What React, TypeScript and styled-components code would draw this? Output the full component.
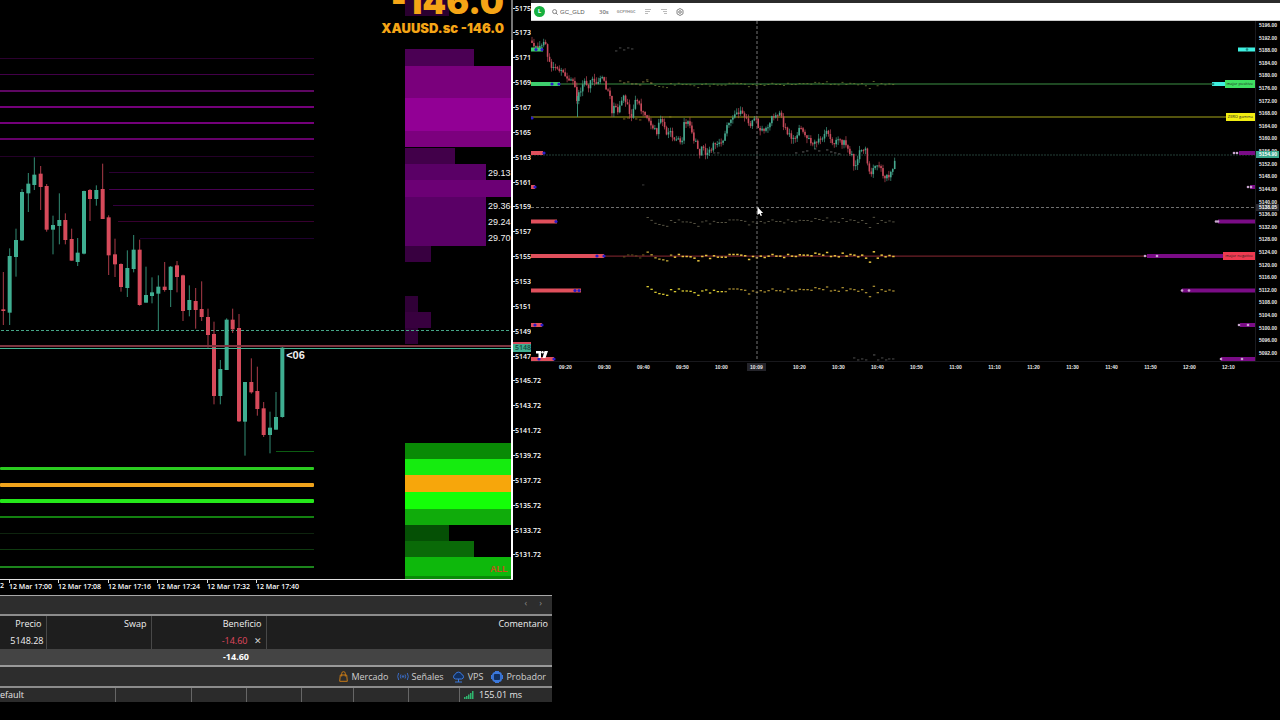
import React from "react";
import styled, { createGlobalStyle } from "styled-components";

const Global = createGlobalStyle`
  * { box-sizing: border-box; }
  body { margin: 0; background: #000; color: #e6e6e6; font-family: "Open Sans", "Noto Sans", sans-serif; }
  button, input { font: inherit; color: inherit; }
`;

const TEAL = "#3fae91";
const RED = "#d64a5a";

/* ---------- data ---------- */

type Candle = [x: number, up: 0 | 1, hi: number, top: number, bottom: number, lo: number];

// Coordinates are thirds of a pixel, measured from y = 140.
const candles: Candle[] = [
  [10, 0, 396, 508, 513, 555], [29, 1, 325, 348, 518, 555], [48, 1, 266, 300, 351, 410],
  [66, 1, 147, 156, 301, 303], [85, 1, 99, 131, 160, 216], [103, 1, 52, 104, 135, 150],
  [122, 0, 78, 101, 141, 210], [140, 0, 132, 138, 269, 275], [159, 1, 227, 255, 269, 343],
  [178, 1, 160, 240, 258, 313], [196, 0, 220, 240, 300, 313], [215, 0, 266, 297, 362, 362],
  [233, 1, 294, 338, 366, 378], [252, 1, 152, 153, 341, 343], [270, 0, 147, 150, 177, 243],
  [289, 1, 136, 150, 177, 197], [308, 0, 71, 147, 237, 237], [326, 0, 226, 232, 346, 405],
  [345, 0, 296, 343, 373, 411], [363, 0, 370, 372, 441, 455], [382, 1, 331, 384, 444, 471],
  [401, 1, 285, 329, 387, 397], [419, 0, 299, 329, 495, 497], [438, 1, 380, 465, 488, 488],
  [456, 1, 412, 457, 468, 490], [475, 1, 406, 440, 461, 570], [494, 0, 366, 440, 450, 455],
  [512, 1, 378, 380, 450, 501], [531, 0, 363, 376, 411, 457], [549, 0, 404, 406, 513, 543],
  [568, 1, 436, 480, 510, 529], [587, 0, 444, 483, 510, 566], [605, 0, 424, 507, 531, 543],
  [624, 0, 506, 531, 585, 623], [642, 0, 545, 582, 768, 793], [661, 1, 660, 687, 768, 793],
  [680, 1, 535, 539, 690, 690], [698, 0, 506, 539, 568, 579], [717, 0, 522, 564, 844, 846],
  [735, 1, 726, 726, 845, 947], [754, 0, 655, 726, 757, 761], [772, 0, 680, 753, 807, 827],
  [791, 0, 786, 805, 885, 891], [810, 1, 815, 863, 885, 940], [828, 1, 756, 831, 869, 869],
  [847, 1, 620, 623, 831, 833],
];

// [top, bottom, right edge, colour]
const profile: [number, number, number, string][] = [
  [0, 16, 449, "#2a0030"], [49, 66, 474, "#4b0054"], [66, 98, 511, "#7a007c"], [98, 131, 511, "#920095"],
  [131, 147, 511, "#7c007e"], [148, 164, 455, "#42004a"], [164, 180, 486, "#5a0066"],
  [180, 197, 511, "#6c0075"], [197, 246, 486, "#5a0066"], [246, 262, 431, "#380040"],
  [296, 312, 418, "#300037"], [312, 328, 431, "#38003f"], [328, 344, 418, "#300037"],
  [443, 459, 511, "#098a05"], [459, 475, 511, "#15ec0f"], [475, 492, 511, "#f7a60b"],
  [492, 509, 511, "#14ff08"], [509, 525, 511, "#10ac0b"], [525, 541, 449, "#055005"],
  [541, 557, 474, "#0a6a08"], [557, 576, 511, "#0eb80c"], [576, 579, 511, "#0a8a08"],
];

// [y, start x, thickness, colour]
const levels: [number, number, number, string][] = [
  [58, 0, 1, "#2c0030"], [74, 0, 1, "#420048"], [91, 0, 2, "#5e0762"], [107, 0, 2, "#74007a"],
  [123, 0, 2, "#74007a"], [139, 0, 2, "#66006a"], [156, 0, 1, "#240028"], [172, 109, 1, "#2c0034"],
  [189, 109, 1, "#480052"], [205, 113, 1, "#34003e"], [221, 118, 1, "#380030"], [238, 140, 1, "#200030"],
  [451, 276, 1, "#0c5c12"], [468, 0, 3, "#2bcb20"], [485, 0, 4, "#efa31c"], [501, 0, 4, "#25e81a"],
  [517, 0, 2, "#138010"], [533, 0, 1, "#0e240e"], [549, 0, 1, "#0f3a10"], [567, 0, 2, "#1c841c"],
];

const leftPrices = Array.from({ length: 23 }, (_, i) => {
  const p = 5175 - i * 2;
  return p >= 5147 ? String(p) : `${p}.72`;
});

const leftTimes = ["17:00", "17:08", "17:16", "17:24", "17:32", "17:40"];
const rightPrices = Array.from({ length: 27 }, (_, i) => `${5196 - i * 4}.00`);
const rightTimes = Array.from({ length: 18 }, (_, i) => {
  const m = 560 + i * 10;
  return `${String(Math.floor(m / 60)).padStart(2, "0")}:${String(m % 60).padStart(2, "0")}`;
});

const trend: [number, number][] = [
  [532, 44], [541, 46], [545, 41], [547, 56], [549, 64], [553, 68], [558, 67], [563, 72], [566, 76],
  [570, 80], [573, 82], [575, 90], [577, 99], [579, 92], [582, 90], [584, 80], [588, 88], [591, 80],
  [594, 80], [597, 86], [601, 80], [604, 79], [607, 93], [610, 94], [612, 112], [615, 103], [618, 113],
  [621, 100], [624, 96], [627, 104], [630, 116], [632, 119], [634, 106], [637, 98], [640, 107],
  [645, 115], [648, 116], [651, 125], [654, 129], [657, 132], [659, 118], [663, 122], [666, 137],
  [669, 130], [672, 137], [677, 138], [682, 142], [684, 120], [688, 122], [692, 133], [697, 147],
  [699, 154], [703, 145], [706, 157], [710, 150], [713, 146], [722, 144], [725, 132], [730, 120],
  [733, 116], [740, 111], [743, 113], [750, 127], [753, 118], [757, 120], [758, 127], [763, 132],
  [768, 129], [772, 117], [775, 118], [781, 113], [783, 125], [787, 132], [794, 139], [798, 132],
  [802, 128], [805, 138], [810, 141], [816, 143], [820, 137], [827, 133], [832, 144], [837, 142],
  [843, 142], [848, 148], [852, 157], [854, 168], [857, 162], [859, 148], [865, 148], [867, 160],
  [870, 178], [873, 167], [878, 163], [881, 170], [885, 179], [890, 173], [893, 168], [896, 155],
];

const trendAt = (x: number) => {
  for (let i = 1; i < trend.length; i++) {
    const [x0, y0] = trend[i - 1];
    const [x1, y1] = trend[i];
    if (x <= x1) return y0 + ((y1 - y0) * (x - x0)) / (x1 - x0);
  }
  return trend[trend.length - 1][1];
};

const noise = (i: number) => {
  const s = Math.sin(i * 127.1) * 43758.5453;
  return s - Math.floor(s);
};

const wave = [
  -12, -4, 5, 9, 11, 14, -3, 3, -5, 1, 1, 2, 6, 14, 1, -2, 7, -1, 3, 3, 3, -5, -5, -5, -3, -1, 10, 1, 5, 0,
  4, 0, -5, 0, 0, 4, -5, 0, 1, -4, -3, -3, -1, -9, -6, -3, -11, 1, -1, 2, -9, 0, -5, -3, 2, -3, 6, 18,
  -13, 6, -3, 2, -2, 1,
];

const strayDots: [number, number, string][] = [
  [616, 51, "#555"], [620, 48, "#555"], [624, 50, "#555"], [628, 48, "#555"], [632, 49, "#555"],
  [620, 81, "#8a7a40"], [624, 83, "#8a7a40"], [628, 82, "#8a7a40"], [632, 84, "#8a7a40"], [636, 84, "#8a7a40"],
  [640, 85, "#8a7a40"], [643, 82, "#8a7a40"], [647, 80, "#8a7a40"], [651, 83, "#8a7a40"],
  [624, 119, "#8a6a20"], [628, 118, "#8a6a20"], [636, 119, "#8a6a20"], [640, 120, "#8a6a20"], [670, 117, "#8a7a20"],
  [643, 185, "#444"], [624, 257, "#6a5a20"], [628, 255, "#6a5a20"], [632, 255, "#6a5a20"], [636, 256, "#6a5a20"],
  [640, 258, "#6a5a20"], [643, 255, "#8a6a20"], [714, 153, "#555"], [718, 153, "#555"],
  [796, 153, "#666"], [803, 152, "#666"], [807, 151, "#666"], [815, 149, "#666"], [819, 151, "#666"],
  [827, 150, "#666"], [831, 152, "#666"], [835, 153, "#666"], [839, 154, "#666"],
  [854, 358, "#555"], [858, 360, "#555"], [862, 359, "#555"], [866, 360, "#555"], [874, 355, "#666"],
  [878, 360, "#555"], [882, 358, "#555"], [886, 360, "#555"], [889, 359, "#555"], [893, 359, "#555"],
];

// [y, right edge, colour, marker centres]
const leftBars: [number, number, string, number[]][] = [
  [49.5, 543, "#3ecf6e", [536, 542]], [84, 560, "#3ecf6e", [552, 559]], [118, 531, "#d64a5a", [532]],
  [153, 543, "#e0505c", [544]], [187, 535, "#e0505c", [535]], [221.5, 557, "#e0505c", [556]],
  [256, 604, "#e0505c", [597, 604]], [290.5, 581, "#e0505c", [575, 579]], [325, 542, "#e0505c", [535, 542]],
  [359, 554, "#e0505c", [539, 554]],
];

// [y, left edge, colour, marker centres]
const rightBars: [number, number, string, number[]][] = [
  [49.5, 1238, "#3ff0e0", [1247]], [84, 1212, "#3ff0e0", [1213]], [153, 1239, "#7a0c86", [1234, 1237]],
  [187, 1250, "#7a0c86", [1248, 1251]], [221.5, 1218, "#7a0c86", [1216, 1218]],
  [256, 1147, "#7a0c86", [1145, 1157]], [290.5, 1182, "#7a0c86", [1182, 1189]],
  [325, 1240, "#7a0c86", [1239, 1248]], [359, 1221, "#7a0c86", [1221, 1242]],
];

/* ---------- layout ---------- */

const Desktop = styled.main`
  display: grid;
  grid-template-columns: minmax(0, 69fr) minmax(0, 91fr);
  align-items: start;
  overflow: hidden;
`;
const Terminal = styled.section`
  min-width: 0;
`;
const ChartRow = styled.div`
  display: flex;
  height: 579px;
`;
const Plot = styled.div`
  position: relative;
  flex: 1;
  min-width: 0;
  overflow: hidden;
`;
const Drawing = styled.svg`
  display: block;
  width: 100%;
  height: 100%;
`;
const PlotEdge = styled.div`
  width: 2px;
  background: linear-gradient(#777 40px, #fff 40px);
`;
const PriceScale = styled.div`
  position: relative;
  width: 39px;
  height: 562px;
  padding-top: 1px;
  display: flex;
  flex-direction: column;
  justify-content: space-between;
`;
const PriceTick = styled.span`
  display: flex;
  align-items: center;
  height: 14px;
  font-size: 7px;
  font-weight: 600;
  color: #fff;
  &::before { content: ""; width: 2px; height: 1px; background: #ddd; }
`;
const BidTag = styled.span`
  position: absolute;
  top: 342px;
  left: 0;
  width: 22px;
  height: 10px;
  padding-left: 2px;
  border-top: 2px solid #d64a5a;
  background: #3fae91;
  color: #14483c;
  font-size: 7px;
  font-weight: 600;
  line-height: 8px;
`;
const Headline = styled.div`
  position: absolute;
  right: 7px;
  top: -17px;
  text-align: right;
  color: #f5a516;
  font-family: Inter, sans-serif;
  font-weight: 900;
`;
const Points = styled.div`
  font-size: 34px;
  line-height: 38px;
`;
const Symbol = styled.div`
  font-size: 13px;
  line-height: 15px;
`;
const Note = styled.span<{ $top: number; $left: string; $color?: string; $size?: number; $bold?: boolean }>`
  position: absolute;
  top: ${(p) => p.$top}px;
  left: ${(p) => p.$left};
  color: ${(p) => p.$color ?? "#f0f0f0"};
  font-family: "Liberation Sans", sans-serif;
  font-size: ${(p) => p.$size ?? 9}px;
  font-weight: ${(p) => (p.$bold ? 700 : 400)};
  line-height: 12px;
`;
const TimeScale = styled.div`
  display: flex;
  width: 93%;
  height: 16px;
  font-size: 7px;
  font-weight: 600;
  line-height: 11px;
  color: #fff;
`;
const AxisLine = styled.div`
  width: 93%;
  height: 1px;
  background: #e0e0e0;
`;
const TimeStub = styled.span`
  width: 9px;
  flex: none;
`;
const TimeTick = styled.span`
  position: relative;
  width: 50px;
  flex: 0 1 50px;
  margin-right: -1px;
  white-space: nowrap;
  padding-top: 1px;
  &:nth-child(odd) { margin-right: 0; }
  &::before { content: ""; position: absolute; left: 0; top: 0; width: 1px; height: 3px; background: #ddd; }
`;

const Toolbox = styled.div`
  background: #2d2d2d;
  border-top: 1px solid #a8a8a8;
  margin-top: -1px;
`;
const TabStrip = styled.div`
  display: flex;
  justify-content: flex-end;
  align-items: center;
  gap: 12px;
  height: 18px;
  padding: 0 10px 4px 0;
`;
const PlainButton = styled.button`
  display: inline-flex;
  align-items: center;
  gap: 3px;
  padding: 0;
  border: 0;
  background: none;
  font-size: 9px;
  line-height: 12px;
  color: #cfcfcf;
  cursor: pointer;
`;
const ArrowButton = styled(PlainButton)`
  color: #8a8a8a;
`;
const Trades = styled.table`
  width: 100%;
  table-layout: fixed;
  border-collapse: collapse;
  border-top: 2px solid #8c8c8c;
  border-bottom: 2px solid #9a9a9a;
  background: #1e1e1e;
  font-size: 9px;
  line-height: 12px;
  color: #f0f0f0;
`;
const Cell = styled.td<{ $divided?: boolean; $pad?: number }>`
  padding: 0 ${(p) => p.$pad ?? 4}px 0 0;
  height: 17px;
  text-align: right;
  font-weight: 500;
  white-space: nowrap;
  border-right: ${(p) => (p.$divided ? "1px solid #484848" : "0")};
`;
const Loss = styled.span`
  color: #e0485e;
  margin-right: 6px;
`;
const TotalRow = styled.tr`
  background: #444;
  color: #fff;
  & > td { font-weight: 700; }
`;
const Services = styled.nav`
  display: flex;
  justify-content: flex-end;
  align-items: center;
  gap: 8px;
  height: 19px;
  padding-right: 6px;
`;
const StatusBar = styled.footer`
  display: flex;
  height: 16px;
  border-top: 2px solid #8c8c8c;
  background: #2b2b2b;
  font-size: 9px;
  font-weight: 500;
  line-height: 14px;
`;
const StatusCell = styled.span<{ $width?: number }>`
  display: flex;
  align-items: center;
  gap: 5px;
  flex: ${(p) => (p.$width ? `0 1 ${p.$width}px` : "1")};
  border-right: ${(p) => (p.$width ? "1px solid #666" : "0")};
  padding-left: ${(p) => (p.$width ? 0 : 4)}px;
`;

const Browser = styled.section`
  position: relative;
  margin-left: -21px;
  padding-top: 3px;
  background: #2b2b2b;
`;
const Toolbar = styled.header`
  display: flex;
  align-items: center;
  height: 18px;
  padding-left: 3px;
  border-bottom: 1px solid #ccc;
  background: #fff;
  color: #777;
  font-size: 6px;
`;
const Avatar = styled.button`
  width: 11px;
  height: 11px;
  padding: 0;
  border: 0;
  border-radius: 50%;
  background: #17b03f;
  color: #fff;
  font-size: 6px;
  font-weight: 700;
  line-height: 11px;
`;
const SearchBox = styled.label`
  display: flex;
  align-items: center;
  gap: 2px;
  width: 47px;
  margin-left: 7px;
`;
const SearchInput = styled.input`
  width: 37px;
  padding: 0;
  border: 0;
  outline: 0;
  background: none;
  font-family: "Liberation Sans", sans-serif;
  font-size: 6px;
  color: #555;
`;
const ToolButton = styled(PlainButton)<{ $size?: number }>`
  margin-right: 8px;
  font-size: ${(p) => p.$size ?? 6}px;
  font-weight: 600;
  color: #777;
`;
const MarketRow = styled.div`
  display: flex;
  height: 340px;
  background: #000;
`;
const MarketScale = styled.div`
  position: relative;
  width: 25px;
  padding: 1px 0 4px 3px;
  border-left: 1px solid #1a1a1f;
  display: flex;
  flex-direction: column;
  justify-content: space-between;
  font: 700 5px/7px "Liberation Sans", sans-serif;
  color: #e8e8e8;
`;
const ScaleTag = styled.span<{ $top: number; $bg: string }>`
  position: absolute;
  left: 0;
  top: ${(p) => p.$top}px;
  width: 23px;
  padding-left: 3px;
  background: ${(p) => p.$bg};
  color: #fff;
`;
const LineTag = styled.span<{ $top: number; $bg: string }>`
  position: absolute;
  right: 0;
  top: ${(p) => p.$top}px;
  padding: 0 2px;
  background: ${(p) => p.$bg};
  color: #222;
  font: 400 4px/8px "Open Sans", sans-serif;
  white-space: nowrap;
`;
const MarketTimes = styled.div`
  display: flex;
  height: 12px;
  padding: 1px 32px 0 15px;
  border-top: 1px solid #18181c;
  background: #000;
  font: 700 5px/8px "Liberation Sans", sans-serif;
  color: #e8e8e8;
`;
const MarketTime = styled.span<{ $active?: boolean }>`
  flex: 1;
  text-align: center;
  & > span {
    position: relative;
    padding: 1px ${(p) => (p.$active ? 3 : 0)}px;
    right: ${(p) => (p.$active ? 4 : 0)}px;
    background: ${(p) => (p.$active ? "#24242a" : "none")};
  }
`;
const TvLogo = styled.svg`
  position: absolute;
  left: 5px;
  bottom: 3px;
  width: 12px;
  height: 7px;
`;

/* ---------- charts ---------- */

const TerminalChart = () => (
  <Drawing viewBox="0 0 511 579" preserveAspectRatio="none" role="img" aria-label="XAUUSD">
    {profile.map(([t, b, r, c]) => (
      <rect key={t} x={405} y={t} width={r - 405} height={b - t} fill={c} />
    ))}
    {levels.map(([y, x, h, c]) => (
      <rect key={y} x={x} y={y - Math.floor(h / 2)} width={314 - x} height={h} rx={h > 2 ? 1 : 0} fill={c} />
    ))}
    <line x1={1} x2={511} y1={330.5} y2={330.5} stroke="#46a888" strokeDasharray="3 2" />
    {candles.map(([x, up, hi, t, b, lo]) => {
      const c = up ? TEAL : RED;
      return (
        <g key={x} fill={c}>
          <rect x={x / 3 - 0.5} y={140 + hi / 3} width={1} height={(lo - hi) / 3} opacity={0.8} />
          <rect x={x / 3 - 2} y={140 + t / 3} width={4} height={Math.max(1.5, (b - t) / 3)} />
        </g>
      );
    })}
    <rect x={0} y={345} width={511} height={2} fill="#7c3540" />
    <rect x={0} y={348} width={511} height={1} fill="#45b394" />
  </Drawing>
);

const MarketChart = () => (
  <Drawing viewBox="531 21 724 340" preserveAspectRatio="none" role="img" aria-label="GC_GLD">
    <rect x={531} y={83.5} width={724} height={1} fill="#3c8f45" />
    <rect x={531} y={116.5} width={724} height={1} fill="#a5a51a" />
    <line x1={531} x2={1255} y1={155} y2={155} stroke="#2f5048" strokeWidth={0.8} strokeDasharray="2 1" />
    <rect x={531} y={255.6} width={724} height={1} fill="#8a2833" />
    {wave.map((d, i) => {
      const x = 646.5 + i * 3.9;
      const y = d / 3;
      return (
        <g key={i}>
          <rect x={x} y={84 + y * 0.7} width={2} height={0.8} fill="#6f7a35" />
          <rect x={x} y={221.2 + y} width={2.4} height={0.8} fill="#6a6652" />
          <rect x={x} y={255.4 + y} width={2.4} height={1.5} fill={i < 7 ? "#a89030" : "#e8c540"} />
          <rect x={x} y={290 + y} width={2.4} height={1.3} fill={i < 20 ? "#d8c832" : "#a58a30"} />
        </g>
      );
    })}
    {strayDots.map(([x, y, c]) => (
      <rect key={`${x}-${y}`} x={x - 1} y={y - 0.5} width={2.4} height={0.9} fill={c} />
    ))}
    {Array.from({ length: 187 }, (_, i) => {
      const x = 532 + i * 1.95;
      const a = trendAt(x - 1.95) + (noise(i) - 0.5) * 6;
      const b = trendAt(x) + (noise(i + 1) - 0.5) * 6;
      const top = Math.min(a, b);
      const h = Math.max(1, Math.abs(a - b));
      const up = noise(i + 400) * 5;
      const down = noise(i + 900) * 5;
      return (
        <g key={i} fill={b < a ? "#46a88e" : "#c94b5c"}>
          <rect x={x - 0.4} y={top - up} width={0.8} height={h + up + down} opacity={0.8} />
          <rect x={x - 0.8} y={top} width={1.6} height={h} />
        </g>
      );
    })}
    <rect x={577} y={96} width={0.9} height={21} fill="#3f9c84" />
    {leftBars.map(([y, r, c, marks]) => (
      <g key={y}>
        <rect x={531} y={y - 2} width={Math.max(0, r - 531)} height={4} fill={c} />
        {marks.map((m) => (
          <circle key={m} cx={m} cy={y} r={1.6} fill="#2a1cc8" />
        ))}
      </g>
    ))}
    {rightBars.map(([y, l, c, marks]) => (
      <g key={y}>
        <rect x={l} y={y - 2} width={1255 - l} height={4} fill={c} />
        {marks.map((m) => (
          <circle key={m} cx={m} cy={y} r={1.3} fill={c === "#7a0c86" ? "#c9a6cf" : "#1f8f88"} />
        ))}
      </g>
    ))}
    <line x1={757} x2={757} y1={21} y2={361} stroke="#747474" strokeWidth={1} strokeDasharray="3 2" />
    <line x1={531} x2={1255} y1={207.5} y2={207.5} stroke="#707070" strokeWidth={1} strokeDasharray="3 2" />
    <path d="M757.5 207v8l2-1.600 1.200 2.600 1.300-.6-1.200-2.500h2.300z" fill="#fff" />
  </Drawing>
);

/* ---------- icons ---------- */

const BagIcon = () => (
  <svg width="9" height="11" viewBox="0 0 9 11" fill="none" stroke="#c77a16">
    <path d="M1.300 4h6.400l.6 6.300H.7zM2.700 5.500V2.500a1.800 1.800 0 013.600 0v3" />
  </svg>
);
const SignalIcon = () => (
  <svg width="12" height="9" viewBox="0 0 12 9" fill="none" stroke="#3a6bc4">
    <circle cx="6" cy="4.500" r=".8" fill="#3a6bc4" />
    <path d="M4 2.500q-1.300 2 0 4M8 2.500q1.300 2 0 4M1.700 1q-2 3.500 0 7M10.300 1q2 3.500 0 7" />
  </svg>
);
const CloudIcon = () => (
  <svg width="13" height="12" viewBox="0 0 13 12" fill="#12305e" stroke="#3b78dc">
    <path d="M3.500 8a2.300 2.300 0 01-.3-4.500 3.400 3.400 0 016.500 0A2.300 2.300 0 019.700 8z" />
    <path d="M6.500 8v3M3 11h7" />
  </svg>
);
const ChipIcon = () => (
  <svg width="12" height="12" viewBox="0 0 12 12" fill="none" stroke="#3b78dc">
    <rect x="2" y="2" width="8" height="8" rx="2" fill="#12305e" strokeWidth="1.800" />
    <path d="M4 .5h4M4 11.500h4M.5 4v4M11.500 4v4" />
  </svg>
);
const BarsIcon = () => (
  <svg width="10" height="8" viewBox="0 0 10 8" fill="#2fb56e">
    <path d="M0 6h1.500v2H0zM2 5h1.500v3H2zM4 3.500h1.500V8H4zM6 2h1.500v6H6zM8 0h1.500v8H8z" />
  </svg>
);
const SearchIcon = () => (
  <svg width="6" height="6" viewBox="0 0 6 6" fill="none" stroke="#666" strokeWidth=".8">
    <circle cx="2.600" cy="2.600" r="2" />
    <path d="M4 4l1.700 1.700" />
  </svg>
);
const LinesIcon = ({ flip }: { flip?: boolean }) => (
  <svg width="8" height="7" viewBox="0 0 8 7" fill="none" stroke="#aaa" strokeWidth=".8">
    <path d={flip ? "M1 1.500h6M3 3.500h4M4 5.500h3" : "M1 1.500h6M1 3.500h5M1 5.500h3"} />
  </svg>
);
const GearIcon = () => (
  <svg width="8" height="8" viewBox="0 0 8 8" fill="none" stroke="#666" strokeWidth=".8">
    <path d="M4 .5l3 1.700v3.600L4 7.500l-3-1.700V2.200z" />
    <circle cx="4" cy="4" r="1.300" />
  </svg>
);

/* ---------- page ---------- */

const App: React.FC = () => (
  <>
    <Global />
    <Desktop>
      <Terminal>
        <ChartRow>
          <Plot>
            <TerminalChart />
            <Headline>
              <Points>-146.0</Points>
              <Symbol>XAUUSD.sc -146.0</Symbol>
            </Headline>
            <Note $top={167} $left="calc(100% - 23px)">29.13</Note>
            <Note $top={200} $left="calc(100% - 23px)">29.36</Note>
            <Note $top={216} $left="calc(100% - 23px)">29.24</Note>
            <Note $top={232} $left="calc(100% - 23px)">29.70</Note>
            <Note $top={349} $left="56%" $size={11} $bold>&lt;06</Note>
            <Note $top={563} $left="calc(100% - 21px)" $color="#c4541a" $bold>ALL</Note>
          </Plot>
          <PlotEdge />
          <PriceScale>
            {leftPrices.map((p) => (
              <PriceTick key={p}>{p}</PriceTick>
            ))}
            <BidTag>5148</BidTag>
          </PriceScale>
        </ChartRow>
        <AxisLine />
        <TimeScale>
          <TimeStub>2</TimeStub>
          {leftTimes.map((t) => (
            <TimeTick key={t}>12 Mar {t}</TimeTick>
          ))}
        </TimeScale>

        <Toolbox>
          <TabStrip>
            <ArrowButton aria-label="Anterior">‹</ArrowButton>
            <ArrowButton aria-label="Siguiente">›</ArrowButton>
          </TabStrip>
          <Trades>
            <colgroup>
              <col style={{ width: 46 }} />
              <col style={{ width: 105 }} />
              <col style={{ width: 115 }} />
              <col />
            </colgroup>
            <thead>
              <tr>
                <Cell as="th" $divided>Precio</Cell>
                <Cell as="th" $divided>Swap</Cell>
                <Cell as="th" $divided>Beneficio</Cell>
                <Cell as="th">Comentario</Cell>
              </tr>
            </thead>
            <tbody>
              <tr>
                <Cell $divided $pad={2}>5148.28</Cell>
                <Cell $divided />
                <Cell $divided>
                  <Loss>-14.60</Loss>
                  <PlainButton aria-label="Cerrar">✕</PlainButton>
                </Cell>
                <Cell />
              </tr>
              <TotalRow>
                <Cell />
                <Cell />
                <Cell $pad={17}>-14.60</Cell>
                <Cell />
              </TotalRow>
            </tbody>
          </Trades>
          <Services>
            <PlainButton><BagIcon />Mercado</PlainButton>
            <PlainButton><SignalIcon />Señales</PlainButton>
            <PlainButton><CloudIcon />VPS</PlainButton>
            <PlainButton><ChipIcon />Probador</PlainButton>
          </Services>
          <StatusBar>
            <StatusCell $width={116}>efault</StatusCell>
            <StatusCell $width={76} />
            <StatusCell $width={55} />
            <StatusCell $width={55} />
            <StatusCell $width={52} />
            <StatusCell $width={55} />
            <StatusCell $width={51} />
            <StatusCell><BarsIcon />155.01 ms</StatusCell>
          </StatusBar>
        </Toolbox>
      </Terminal>

      <Browser>
        <Toolbar>
          <Avatar>L</Avatar>
          <SearchBox>
            <SearchIcon />
            <SearchInput defaultValue="GC_GLD" aria-label="Symbol" />
          </SearchBox>
          <ToolButton>30s</ToolButton>
          <ToolButton $size={4}>GCPYHGC</ToolButton>
          <ToolButton aria-label="Align left"><LinesIcon /></ToolButton>
          <ToolButton aria-label="Align right"><LinesIcon flip /></ToolButton>
          <ToolButton aria-label="Settings"><GearIcon /></ToolButton>
        </Toolbar>
        <MarketRow>
          <Plot>
            <MarketChart />
            <LineTag $top={59} $bg="#3fdf62">major positive</LineTag>
            <LineTag $top={92} $bg="#f2ee12">ZERO gamma</LineTag>
            <LineTag $top={231} $bg="#ee3a50">major negative</LineTag>
            <TvLogo viewBox="0 0 12 7" fill="#fff" aria-hidden="true">
              <path d="M0 0h5v7H2.500V2.500H0zM8.500 0H12L9.500 7H6.500z" />
              <circle cx="6.500" cy="1.300" r="1.200" />
            </TvLogo>
          </Plot>
          <MarketScale>
            {rightPrices.map((p) => (
              <span key={p}>{p}</span>
            ))}
            <ScaleTag $top={130} $bg="#3aa68c">5154.90</ScaleTag>
            <ScaleTag $top={183} $bg="#2a2a30">5138.05</ScaleTag>
          </MarketScale>
        </MarketRow>
        <MarketTimes>
          {rightTimes.map((t) => (
            <MarketTime key={t} $active={t === "10:10"}>
              <span>{t === "10:10" ? "10:09" : t}</span>
            </MarketTime>
          ))}
        </MarketTimes>
      </Browser>
    </Desktop>
  </>
);

export default App;
